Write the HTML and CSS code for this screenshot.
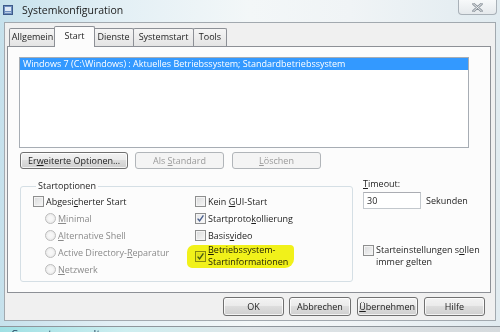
FILE: index.html
```html
<!DOCTYPE html>
<html lang="de">
<head>
<meta charset="utf-8">
<title>Systemkonfiguration</title>
<link rel="stylesheet" href="styles.css">
</head>
<body>
<div class="window">
  <div class="titlebar">
    <svg class="appicon" width="10" height="10" viewBox="0 0 10 10">
      <rect x="0.5" y="0.5" width="9" height="9" fill="#6f8fbf" stroke="#3e5a8a"/>
      <rect x="2" y="2" width="6" height="4" fill="#dfe9f6"/>
      <rect x="2" y="7" width="6" height="1" fill="#b9cbe4"/>
    </svg>
    <span class="title">Systemkonfiguration</span>
    <div class="close">
      <svg width="11" height="9" viewBox="0 0 11 9">
        <path d="M1.5 1 L9.5 8 M9.5 1 L1.5 8" stroke="#8d959d" stroke-width="2.6" stroke-linecap="round"/>
        <path d="M1.5 1 L9.5 8 M9.5 1 L1.5 8" stroke="#f4f6f7" stroke-width="0.9" stroke-linecap="round"/>
      </svg>
    </div>
  </div>
  <div class="client">
    <div class="tabs">
      <div class="tab t-allg">Allgemein</div>
      <div class="tab t-start active">Start</div>
      <div class="tab t-dienste">Dienste</div>
      <div class="tab t-sys">Systemstart</div>
      <div class="tab t-tools">Tools</div>
    </div>
    <div class="panel">
      <div class="listbox">
        <div class="row sel">Windows 7 (C:\Windows) : Aktuelles Betriebssystem; Standardbetriebssystem</div>
      </div>
      <div class="btnrow">
        <div class="btn b-erw">Er<u>w</u>eiterte Optionen...</div>
        <div class="btn b-std dis">Als <u>S</u>tandard</div>
        <div class="btn b-del dis"><u>L</u>öschen</div>
      </div>
      <div class="lower">
        <fieldset class="group">
          <legend>Startoptionen</legend>
          <div class="cols">
            <div class="col">
              <div class="opt"><span class="cb"></span><span>Abgesi<u>c</u>herter Start</span></div>
              <div class="opt sub dis"><span class="rb"></span><span><u>M</u>inimal</span></div>
              <div class="opt sub dis"><span class="rb"></span><span><u>A</u>lternative Shell</span></div>
              <div class="opt sub dis"><span class="rb"></span><span>Active Directory-<u>R</u>eparatur</span></div>
              <div class="opt sub dis"><span class="rb"></span><span><u>N</u>etzwerk</span></div>
            </div>
            <div class="col">
              <div class="opt"><span class="cb"></span><span>Kein <u>G</u>UI-Start</span></div>
              <div class="opt"><span class="cb checked"><svg width="9" height="9" viewBox="0 0 9 9"><path d="M1.6 4.6 L3.6 6.8 L7.4 1.4" fill="none" stroke="#4a5e8c" stroke-width="1.4"/></svg></span><span>Startproto<u>k</u>ollierung</span></div>
              <div class="opt"><span class="cb"></span><span>Basis<u>v</u>ideo</span></div>
              <div class="opt multi marked"><span class="cb checked"><svg width="9" height="9" viewBox="0 0 9 9"><path d="M1.6 4.6 L3.6 6.8 L7.4 1.4" fill="none" stroke="#4a5e8c" stroke-width="1.4"/></svg></span><span><u>B</u>etriebssystem-<br>Startinformationen</span></div>
            </div>
          </div>
        </fieldset>
        <div class="timeout">
          <div class="tlabel"><u>T</u>imeout:</div>
          <div class="tline">
            <div class="tinput">30</div>
            <span class="unit">Sekunden</span>
          </div>
          <div class="persist"><span class="cb"></span><span>Starteinstellungen s<u>o</u>llen<br>immer gelten</span></div>
        </div>
      </div>
    </div>
    <div class="footer">
      <div class="btn fb">OK</div>
      <div class="btn fb">Abbrechen</div>
      <div class="btn fb"><u>Ü</u>bernehmen</div>
      <div class="btn fb">Hilfe</div>
    </div>
  </div>
  <div class="frame-bottom"></div>
</div>
<div class="strip"><span class="striptext">Computerverwaltung</span></div>
</body>
</html>
```
FILE: styles.css
```css
* { box-sizing: border-box; }
html, body { margin: 0; padding: 0; }
body {
  width: 500px; height: 332px; overflow: hidden;
  font-family: "Open Sans", "Noto Sans", sans-serif;
  font-size: 9px;
  color: #1e1e1e;
  background: #dfe7eb;
}
u { text-decoration: underline; text-underline-offset: 1px; }

.window {
  height: 326px;
  display: flex; flex-direction: column;
  background: linear-gradient(90deg, #c6e1ec 0%, #e2eff5 22%, #f3f7f8 50%, #f0f4f6 70%, #e1ebf0 100%);
}
.titlebar { height: 22px; display: flex; align-items: flex-start; }
.appicon { margin: 5px 0 0 3px; }
.title { margin: 3px 0 0 9px; font-size: 10.5px; line-height: 14px; color: #1b1b1b; }
.close {
  margin-left: auto; margin-right: 3px;
  width: 39px; height: 15px;
  border: 1px solid #a9b1b8; border-top: none;
  border-radius: 0 0 4px 4px;
  background: linear-gradient(#f7f9fa, #e5e9ec);
  display: flex; align-items: center; justify-content: center;
}

.client {
  margin: 0 4px;
  height: 299px;
  border: 1px solid #a2a9af;
  background: #f0f0f0;
  padding: 3px 4px 0 2px;
}

.tabs { height: 20px; display: flex; align-items: flex-end; padding-left: 2px; position: relative; z-index: 1; }
.tab {
  height: 18px;
  border: 1px solid #8d9096; border-bottom: none;
  border-radius: 2px 2px 0 0;
  background: linear-gradient(#f5f5f5, #e4e4e4);
  text-align: center; line-height: 16px;
  white-space: nowrap;
}
.t-allg { width: 47px; }
.t-start { width: 41px; margin-left: -2px; margin-right: -2px; }
.t-dienste { width: 41px; margin-right: -1px; }
.t-sys { width: 61px; margin-right: -1px; }
.t-tools { width: 34px; }
.tab.active {
  height: 21px; margin-bottom: -1px;
  background: #fcfcfc; line-height: 18px;
  position: relative; z-index: 2;
}

.panel {
  width: 484px; height: 247px;
  border: 1px solid #8d9096;
  background: #fcfcfc;
  padding: 10px 0 0 11px;
}
.listbox {
  width: 450px; height: 91px;
  border: 1px solid #a7adb4;
  background: #fff;
}
.row { height: 12px; line-height: 12px; padding-left: 3px; white-space: nowrap; }
.row.sel { background: #3399ff; color: #fff; }

.btnrow { display: flex; margin-top: 4px; padding-left: 1px; }
.btn {
  height: 17px;
  border: 1px solid #707070; border-radius: 3px;
  background: linear-gradient(#f3f3f3 0%, #ebebeb 45%, #dddddd 50%, #cfcfcf 100%);
  box-shadow: inset 0 0 0 1px rgba(255,255,255,0.75);
  text-align: center; line-height: 15px;
  white-space: nowrap;
}
.btn.dis { border-color: #b1b5b9; background: #f4f4f4; color: #9a9a9a; box-shadow: none; }
.b-erw { width: 108px; }
.b-std { width: 89px; margin-left: 7px; }
.b-del { width: 89px; margin-left: 8px; }

.lower { display: flex; margin-top: 11px; padding-left: 1px; }
.group {
  width: 333px; margin: 0; padding: 1px 0 3px 12px;
  border: 1px solid #d5dfe5; border-radius: 3px;
  min-width: 0;
}
.group legend { padding: 0 2px; margin-left: 3px; line-height: 12px; }
.cols { display: grid; grid-template-columns: 162px auto; }
.opt { height: 17px; display: flex; align-items: center; gap: 2px; white-space: nowrap; line-height: 12px; }
.opt.sub { padding-left: 12px; }
.opt.dis { color: #8a8a8a; }
.opt.multi { height: 24px; position: relative; }
.marked::after {
  content: ""; position: absolute;
  left: -8px; top: 1px; width: 107px; height: 23px;
  background: #f4f41a;
  border-radius: 7px 4px 9px 5px;
  mix-blend-mode: multiply;
}
.cb {
  width: 11px; height: 11px; flex: none;
  border: 1px solid #8e8f8f;
  background: linear-gradient(135deg, #d9dadb, #f7f7f7);
  box-shadow: inset 0 0 0 1px #f4f4f4;
  display: flex; align-items: center; justify-content: center;
}
.cb.checked { background: linear-gradient(135deg, #e4e6ea, #fbfbfb); }
.rb {
  width: 11px; height: 11px; flex: none;
  border: 1px solid #bcbcbc; border-radius: 50%;
  background: radial-gradient(circle at 50% 50%, #f7f7f7 30%, #e2e2e2 100%);
}

.timeout { margin-left: 10px; margin-top: -2px; }
.tlabel { line-height: 12px; }
.tline { display: flex; align-items: center; margin-top: 2px; }
.tinput {
  width: 58px; height: 17px;
  border: 1px solid #c3c8cd; border-top-color: #abadb3;
  background: #fff; padding-left: 3px; line-height: 15px;
}
.unit { margin-left: 5px; }
.persist { display: flex; align-items: flex-start; gap: 2px; margin-top: 35px; line-height: 12px; }
.persist .cb { margin-top: 1px; }

.footer { display: flex; margin-top: 4px; padding-left: 216px; }
.fb { width: 63px; height: 19px; line-height: 17px; margin-right: 6px; }
.fb:first-child { margin-right: 5px; }

.frame-bottom { flex: 1; }
.strip {
  height: 6px; overflow: hidden;
  border-top: 1px solid #8f969c;
  background: linear-gradient(90deg, #9fe0e4 0%, #cdeef0 25%, #dfe5e8 50%, #d5dadd 100%);
  padding-left: 11px;
}
.striptext { display: block; font-size: 11px; line-height: 11px; color: #1c3b57; margin-top: 1px; }
```
